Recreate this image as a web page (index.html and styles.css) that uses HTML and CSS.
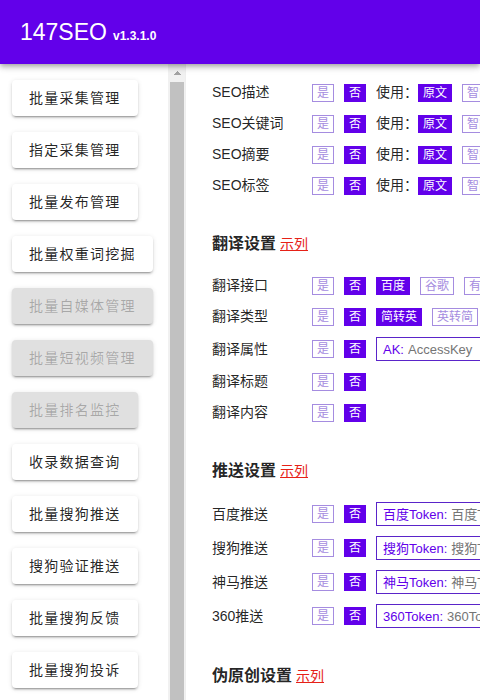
FILE: index.html
```html
<!DOCTYPE html>
<html lang="zh-CN">
<head>
    <meta charset="UTF-8">
    <meta name="viewport" content="width=device-width, initial-scale=1.0">
    <title>147SEO</title>
    <link rel="stylesheet" href="styles.css">
</head>
<body>
    <div class="app">
        <header class="topbar">
            <span class="brand">147SEO</span>
            <span class="version">v1.3.1.0</span>
        </header>

        <div class="layout">
            <aside class="sidebar">
                <nav class="menu">
                    <button class="nav-btn">批量采集管理</button>
                    <button class="nav-btn">指定采集管理</button>
                    <button class="nav-btn">批量发布管理</button>
                    <button class="nav-btn">批量权重词挖掘</button>
                    <button class="nav-btn" disabled>批量自媒体管理</button>
                    <button class="nav-btn" disabled>批量短视频管理</button>
                    <button class="nav-btn" disabled>批量排名监控</button>
                    <button class="nav-btn">收录数据查询</button>
                    <button class="nav-btn">批量搜狗推送</button>
                    <button class="nav-btn">搜狗验证推送</button>
                    <button class="nav-btn">批量搜狗反馈</button>
                    <button class="nav-btn">批量搜狗投诉</button>
                </nav>
                <div class="scrollbar">
                    <div class="scroll-up"></div>
                    <div class="scroll-thumb"></div>
                </div>
            </aside>

            <main class="main">
                <div class="group">
                    <div class="rows">
                        <div class="row">
                            <span class="label">SEO描述</span>
                            <span class="chip">是</span><span class="chip on">否</span>
                            <span class="hint">使用：</span>
                            <span class="chip on">原文</span><span class="chip">智能原创</span>
                        </div>
                        <div class="row">
                            <span class="label">SEO关键词</span>
                            <span class="chip">是</span><span class="chip on">否</span>
                            <span class="hint">使用：</span>
                            <span class="chip on">原文</span><span class="chip">智能提取</span>
                        </div>
                        <div class="row">
                            <span class="label">SEO摘要</span>
                            <span class="chip">是</span><span class="chip on">否</span>
                            <span class="hint">使用：</span>
                            <span class="chip on">原文</span><span class="chip">智能提取</span>
                        </div>
                        <div class="row">
                            <span class="label">SEO标签</span>
                            <span class="chip">是</span><span class="chip on">否</span>
                            <span class="hint">使用：</span>
                            <span class="chip on">原文</span><span class="chip">智能提取</span>
                        </div>
                    </div>
                </div>

                <section class="group">
                    <h3 class="group-title">翻译设置<a class="demo">示列</a></h3>
                    <div class="rows">
                        <div class="row">
                            <span class="label">翻译接口</span>
                            <span class="chip">是</span><span class="chip on">否</span>
                            <span class="chip on">百度</span><span class="chip">谷歌</span><span class="chip">有道</span>
                        </div>
                        <div class="row">
                            <span class="label">翻译类型</span>
                            <span class="chip">是</span><span class="chip on">否</span>
                            <span class="chip on">简转英</span><span class="chip">英转简</span><span class="chip">简转繁</span>
                        </div>
                        <div class="row">
                            <span class="label">翻译属性</span>
                            <span class="chip">是</span><span class="chip on">否</span>
                            <label class="field"><span class="field-key">AK:</span><input placeholder="AccessKey"></label>
                        </div>
                        <div class="row">
                            <span class="label">翻译标题</span>
                            <span class="chip">是</span><span class="chip on">否</span>
                        </div>
                        <div class="row">
                            <span class="label">翻译内容</span>
                            <span class="chip">是</span><span class="chip on">否</span>
                        </div>
                    </div>
                </section>

                <section class="group">
                    <h3 class="group-title">推送设置<a class="demo">示列</a></h3>
                    <div class="rows">
                        <div class="row">
                            <span class="label">百度推送</span>
                            <span class="chip">是</span><span class="chip on">否</span>
                            <label class="field"><span class="field-key">百度Token:</span><input placeholder="百度Token"></label>
                        </div>
                        <div class="row">
                            <span class="label">搜狗推送</span>
                            <span class="chip">是</span><span class="chip on">否</span>
                            <label class="field"><span class="field-key">搜狗Token:</span><input placeholder="搜狗Token"></label>
                        </div>
                        <div class="row">
                            <span class="label">神马推送</span>
                            <span class="chip">是</span><span class="chip on">否</span>
                            <label class="field"><span class="field-key">神马Token:</span><input placeholder="神马Token"></label>
                        </div>
                        <div class="row">
                            <span class="label">360推送</span>
                            <span class="chip">是</span><span class="chip on">否</span>
                            <label class="field"><span class="field-key">360Token:</span><input placeholder="360Token"></label>
                        </div>
                    </div>
                </section>

                <section class="group">
                    <h3 class="group-title">伪原创设置<a class="demo">示列</a></h3>
                </section>
            </main>
        </div>
    </div>
</body>
</html>
```

FILE: styles.css
```css
:root {
    --primary: #6200ea;
    --chip-line: #a58ce0;
    --field-line: #5a24c9;
    --track: #f1f1f1;
    --thumb: #c1c1c1;
    --font: "Liberation Sans", "Noto Sans CJK SC", sans-serif;
}

* {
    box-sizing: border-box;
    margin: 0;
    padding: 0;
}

body {
    font-family: var(--font);
    color: rgba(0, 0, 0, 0.87);
    background: #fff;
    overflow: hidden;
}

.app {
    display: flex;
    flex-direction: column;
    height: 100vh;
}

/* top bar */
.topbar {
    position: relative;
    z-index: 2;
    flex-shrink: 0;
    display: flex;
    align-items: baseline;
    height: 64px;
    padding: 0 20px;
    line-height: 64px;
    background: var(--primary);
    color: #fff;
    box-shadow: 0 2px 4px -1px rgba(0, 0, 0, 0.2),
                0 4px 5px 0 rgba(0, 0, 0, 0.14),
                0 1px 10px 0 rgba(0, 0, 0, 0.12);
}

.brand {
    font-size: 23px;
}

.version {
    margin-left: 6px;
    font-size: 12px;
    font-weight: bold;
}

.layout {
    flex: 1;
    display: flex;
    min-height: 0;
}

/* side menu with its scroll rail */
.sidebar {
    width: 185px;
    flex-shrink: 0;
    display: flex;
}

.menu {
    flex: 1;
    display: flex;
    flex-direction: column;
    align-items: flex-start;
    gap: 16px;
    padding: 16px 0 16px 12px;
    overflow: hidden;
}

.scrollbar {
    width: 17px;
    flex-shrink: 0;
    display: flex;
    flex-direction: column;
    background: var(--track);
}

.scroll-up {
    height: 17px;
    flex-shrink: 0;
    background: conic-gradient(from 135deg at 50% 0, #a3a3a3 0 90deg, transparent 90deg)
                no-repeat center / 8px 4px;
}

.scroll-thumb {
    flex: 1;
    margin: 1px 1px 0 2px;
    background: var(--thumb);
}

.nav-btn {
    flex-shrink: 0;
    height: 36px;
    padding: 0 17px;
    border: none;
    border-radius: 4px;
    background: #fff;
    font: 14px/36px var(--font);
    letter-spacing: 1.25px;
    color: rgba(0, 0, 0, 0.87);
    cursor: pointer;
    box-shadow: 0 3px 1px -2px rgba(0, 0, 0, 0.2),
                0 2px 2px 0 rgba(0, 0, 0, 0.14),
                0 1px 5px 0 rgba(0, 0, 0, 0.12);
}

.nav-btn:disabled {
    background: #e0e0e0;
    color: rgba(0, 0, 0, 0.26);
    cursor: default;
}

/* settings panel */
.main {
    flex: 1;
    min-width: 0;
    padding: 18px 0 0 26px;
    border-left: 1px solid #eee;
    overflow: hidden;
    white-space: nowrap;
}

.group + .group {
    margin-top: 36px;
}

.group-title {
    margin-bottom: 19px;
    font-size: 16px;
    line-height: 24px;
    font-weight: bold;
}

.demo {
    margin-left: 4px;
    font-size: 14px;
    font-weight: normal;
    color: #e62117;
    text-decoration: underline;
    cursor: pointer;
}

.rows {
    display: flex;
    flex-direction: column;
    gap: 10px;
}

.row {
    display: flex;
    align-items: center;
    min-height: 21px;
    font-size: 14px;
    line-height: 21px;
}

.label {
    width: 100px;
    flex-shrink: 0;
}

.hint {
    flex-shrink: 0;
}

.chip {
    flex-shrink: 0;
    height: 18px;
    margin-right: 10px;
    padding: 0 4px;
    border: 1px solid var(--chip-line);
    color: var(--chip-line);
    font-size: 12px;
    line-height: 16px;
    cursor: pointer;
}

.chip.on {
    background: var(--primary);
    border-color: var(--primary);
    color: #fff;
}

.field {
    flex-shrink: 0;
    display: flex;
    align-items: center;
    width: 260px;
    height: 24px;
    padding: 0 6px;
    border: 1px solid var(--field-line);
    font-size: 13px;
}

.field-key {
    color: var(--primary);
}

.field input {
    flex: 1;
    min-width: 0;
    margin-left: 4px;
    border: none;
    outline: none;
    background: transparent;
    font: inherit;
    color: rgba(0, 0, 0, 0.87);
}

.field input::placeholder {
    color: #757575;
}
```
